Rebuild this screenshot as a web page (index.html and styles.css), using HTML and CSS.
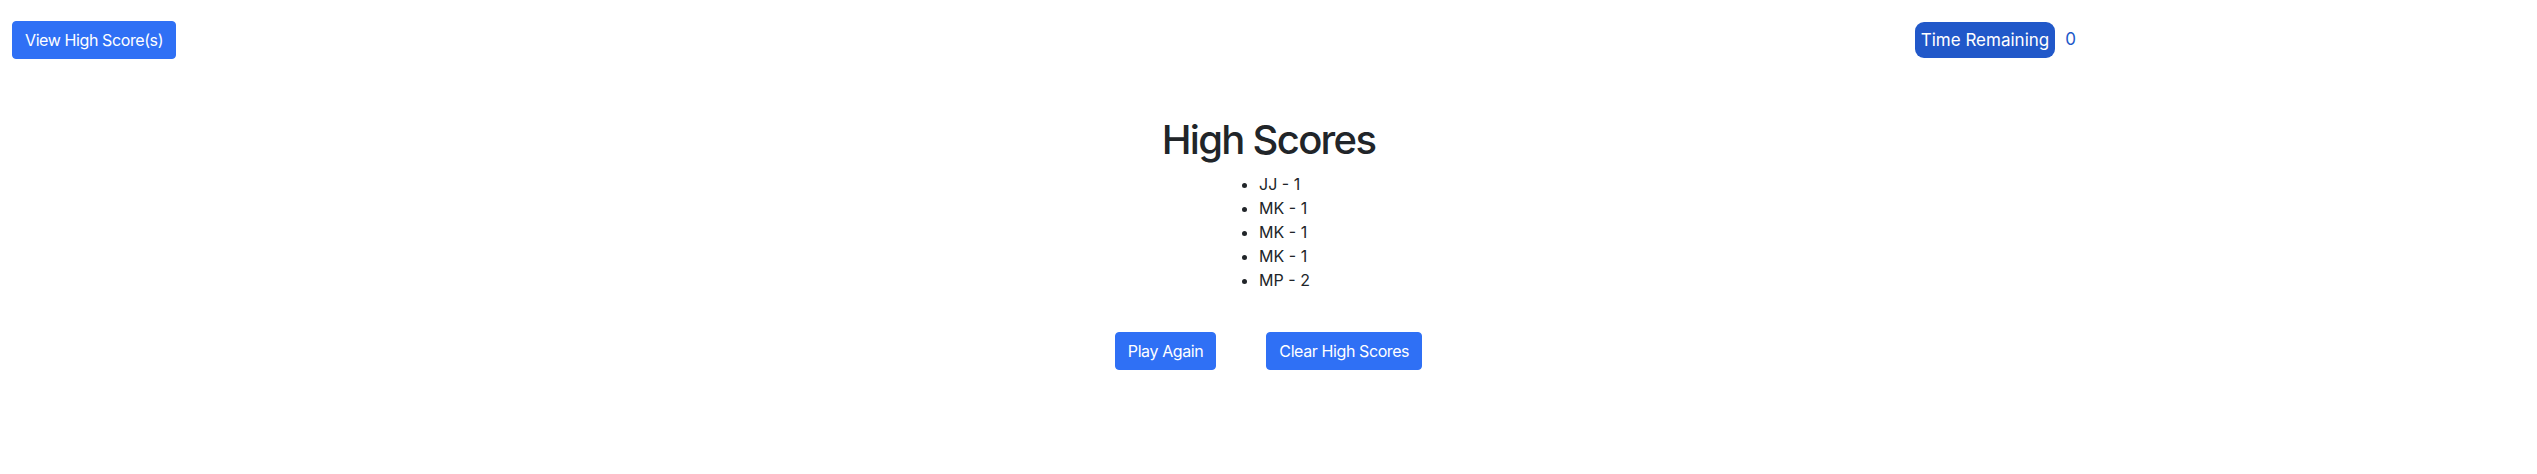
FILE: index.html
```html
<!DOCTYPE html>
<html lang="en">
<head>
<meta charset="utf-8">
<title>Quiz</title>
<link rel="stylesheet" href="styles.css">
</head>
<body>
<header class="top-row">
  <div class="col-left">
    <button class="btn">View High Score(s)</button>
  </div>
  <div class="col-right">
    <span class="badge">Time Remaining</span>
    <span class="timer">0</span>
  </div>
</header>
<main class="scores">
  <h1 class="title">High Scores</h1>
  <ul class="score-list">
    <li>JJ - 1</li>
    <li>MK - 1</li>
    <li>MK - 1</li>
    <li>MK - 1</li>
    <li>MP - 2</li>
  </ul>
  <div class="actions">
    <button class="btn">Play Again</button>
    <button class="btn">Clear High Scores</button>
  </div>
</main>
</body>
</html>
```

FILE: styles.css
```css
* { box-sizing: border-box; }
body {
  margin: 0;
  font-family: Inter, "Liberation Sans", sans-serif;
  font-size: 16px;
  line-height: 1.5;
  color: #212529;
  background: #fff;
}
.top-row {
  display: flex;
  padding-top: 21px;
}
.col-left {
  flex: 0 0 75%;
  padding: 0 12px;
}
.col-right {
  flex: 0 0 25%;
  padding: 0 12px;
  display: flex;
  align-items: center;
  gap: 10px;
}
.btn {
  font-family: inherit;
  font-size: 16px;
  line-height: 24px;
  letter-spacing: -0.4px;
  padding: 6px 12px;
  border: 1px solid #2f70f5;
  border-radius: 4px;
  background: #2f70f5;
  color: #fff;
  cursor: pointer;
}
.badge {
  display: inline-block;
  background: #2158c9;
  color: #fff;
  font-size: 17px;
  line-height: 24px;
  padding: 6px 6px;
  border-radius: 9px;
}
.timer {
  color: #2158c9;
  font-size: 17px;
}
.scores {
  text-align: center;
  padding-top: 57px;
}
.title {
  margin: 0 0 8px;
  font-size: 40px;
  font-weight: 500;
  line-height: 1.2;
  letter-spacing: -1.7px;
}
.score-list {
  display: inline-block;
  text-align: left;
  margin: 0;
  padding-left: 32px;
}
.actions {
  display: flex;
  justify-content: center;
  gap: 50px;
  margin-top: 40px;
}
```
